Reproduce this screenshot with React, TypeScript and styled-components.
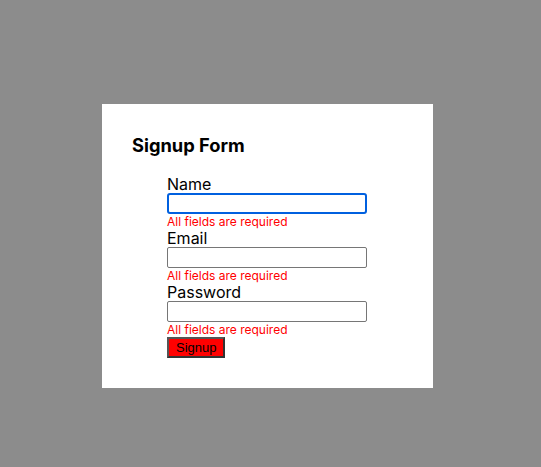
import React from "react";
import styled, { createGlobalStyle } from "styled-components";

const Global = createGlobalStyle`
  html, body { margin: 0; padding: 0; }
  body {
    background: #8c8c8c;
    font-family: Inter, "Noto Sans", sans-serif;
    width: 541px;
    height: 467px;
    overflow: hidden;
  }
`;

const Page = styled.div`
  display: flex;
  align-items: flex-start;
  padding: 104px 0 0 102px;
`;

const Card = styled.div`
  background: #ffffff;
  width: 331px;
  box-sizing: border-box;
  padding: 30px 30px 30px 30px;
`;

const Title = styled.h3`
  margin: 0 0 19px 0;
  font-size: 18.3px;
  line-height: 22px;
  font-weight: 700;
  color: #000;
`;

const Form = styled.form`
  display: flex;
  flex-direction: column;
  align-items: flex-start;
  padding: 0 35px;
`;

const Label = styled.label`
  display: block;
  font-size: 16px;
  line-height: 18px;
  color: #000;
`;

const Input = styled.input<{ $focused?: boolean }>`
  display: block;
  box-sizing: border-box;
  width: 200px;
  height: 21px;
  margin: 0;
  padding: 1px 2px;
  font-size: 13px;
  border: ${(p) => (p.$focused ? "2px solid #0060df" : "1px solid #767676")};
  border-radius: ${(p) => (p.$focused ? "3px" : "2px")};
  outline: none;
  background: #fff;
`;

const Error = styled.span`
  display: block;
  padding-top: 1px;
  font-size: 12px;
  line-height: 14px;
  color: #ff0000;
`;

const Button = styled.button`
  margin: 0;
  padding: 1px 7px;
  height: 21px;
  font-family: "Liberation Sans", Arial, sans-serif;
  font-size: 13px;
  color: #000;
  background: #ff0000;
  border: 2px solid;
  border-color: #555 #333 #333 #555;
  cursor: pointer;
`;

const fields = ["Name", "Email", "Password"];

export default function App() {
  return (
    <>
      <Global />
      <Page>
        <Card>
          <Title>Signup Form</Title>
          <Form onSubmit={(e) => e.preventDefault()}>
            {fields.map((f, i) => (
              <React.Fragment key={f}>
                <Label htmlFor={f}>{f}</Label>
                <Input id={f} type={f === "Password" ? "password" : "text"} $focused={i === 0} />
                <Error>All fields are required</Error>
              </React.Fragment>
            ))}
            <Button type="submit">Signup</Button>
          </Form>
        </Card>
      </Page>
    </>
  );
}
